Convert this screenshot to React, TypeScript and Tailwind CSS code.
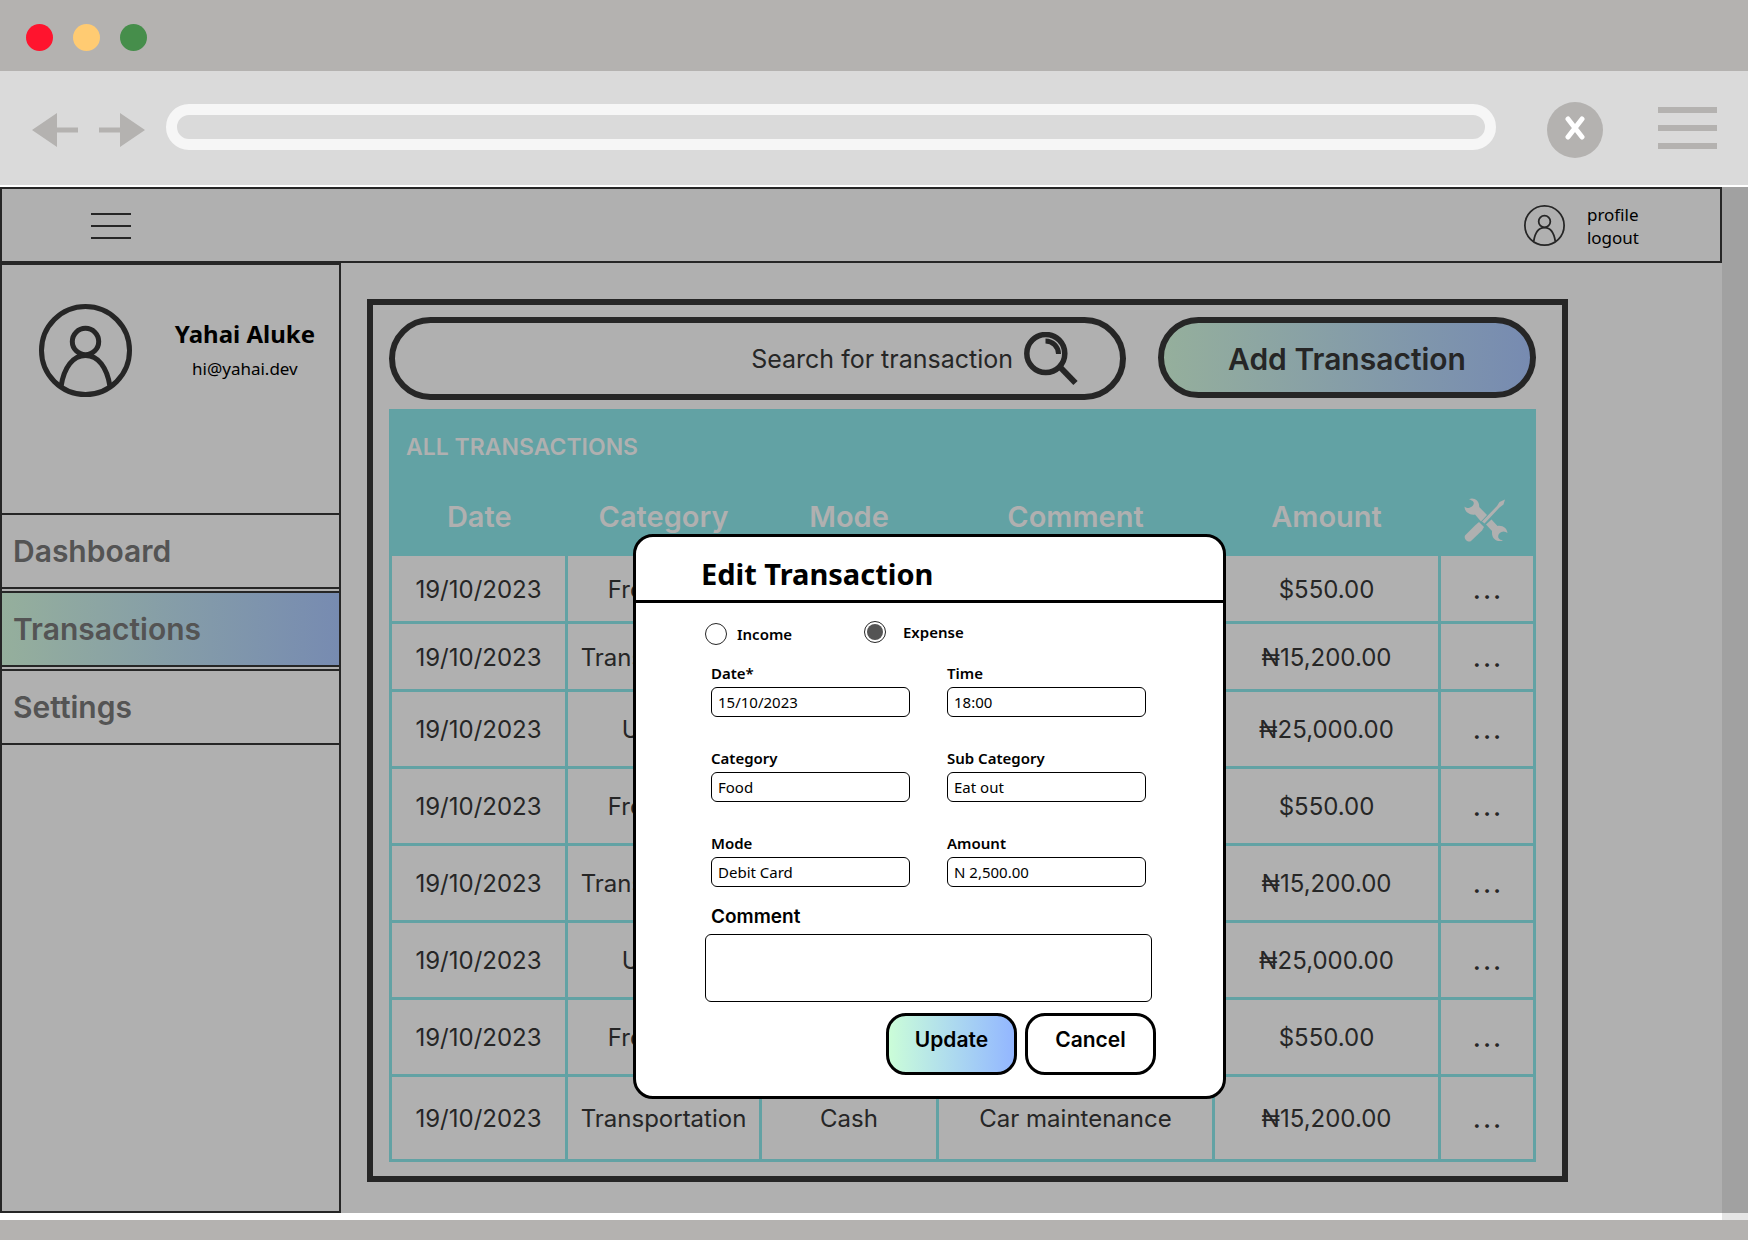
import React from 'react';

const rows = [
  { date: '19/10/2023', category: 'Freelance', mode: '', comment: '', amount: '$550.00', height: 'h-[68px]' },
  { date: '19/10/2023', category: 'Transportation', mode: '', comment: '', amount: '₦15,200.00', height: 'h-[68px]' },
  { date: '19/10/2023', category: 'Utilities', mode: '', comment: '', amount: '₦25,000.00', height: 'h-[77px]' },
  { date: '19/10/2023', category: 'Freelance', mode: '', comment: '', amount: '$550.00', height: 'h-[77px]' },
  { date: '19/10/2023', category: 'Transportation', mode: '', comment: '', amount: '₦15,200.00', height: 'h-[77px]' },
  { date: '19/10/2023', category: 'Utilities', mode: '', comment: '', amount: '₦25,000.00', height: 'h-[77px]' },
  { date: '19/10/2023', category: 'Freelance', mode: '', comment: '', amount: '$550.00', height: 'h-[77px]' },
  { date: '19/10/2023', category: 'Transportation', mode: 'Cash', comment: 'Car maintenance', amount: '₦15,200.00', height: 'h-[85px]' },
];

function Avatar({ className, stroke }: { className: string; stroke: number }) {
  return (
    <svg viewBox="0 0 93 93" className={className} fill="none" stroke="#262626" strokeWidth={stroke} aria-hidden="true">
      <circle cx="46.5" cy="46.5" r={46.5 - stroke / 2} />
      <circle cx="46.5" cy="37.5" r="13.200" />
      <path d="M22 82.5C25 63 34 51.5 46.5 51.5S68 63 71 82.5" />
    </svg>
  );
}

function Magnifier() {
  return (
    <svg viewBox="0 0 54 54" className="h-[54px] w-[54px]" fill="none" stroke="#262626" aria-hidden="true">
      <circle cx="21.800" cy="21.5" r="19" strokeWidth="5.500" />
      <path d="M21.500 9a13 13 0 0 1 13 13" strokeWidth="5" />
      <path d="M35.500 34.500L51.500 51" strokeWidth="6" />
    </svg>
  );
}

function Tools() {
  return (
    <svg viewBox="0 0 44 44" className="h-11 w-11" fill="#b0b0b0" aria-hidden="true">
      <path d="M5 1.200C10 -.8 15.500 2.500 15.200 9L23 17L17 23.500L11 16.500C6 17.500 .5 14 .5 8.500C2 10 4 10.500 6 9.500C9 8.500 10.500 6 9.500 4C8.500 2.500 7 2 5 1.200Z" />
      <path d="M27.500 21.500L33.500 28C38.500 27 43 30 43.500 35C41.500 33.500 39.500 33 37.500 34C35 35 33.500 37.500 34.500 40C35.500 41.500 37 42 39 42.500C33 44.500 28 41 28 35L28 33L22 26.500Z" />
      <path d="M41 1.500L39.500 6.500L35.500 9.500L20.500 25.500L18 23.500L33 8L35.500 4Z" />
      <path d="M15 24L20 29L18 32.500L7 43C4 45 -.5 41 1 37.500L11.500 27Z" />
    </svg>
  );
}

function Arrow({ flip }: { flip?: boolean }) {
  return (
    <svg viewBox="0 0 46 34" className={flip ? 'h-[34px] w-[46px] rotate-180' : 'h-[34px] w-[46px]'} fill="#b4b2b0" aria-hidden="true">
      <path d="M0 17L25 0V14.500H46V19.500H25V34Z" />
    </svg>
  );
}

function Field({ id, label, value }: { id: string; label: string; value: string }) {
  return (
    <div className="flex flex-col">
      <label htmlFor={id} className="h-7 text-[15px] leading-7 font-semibold">{label}</label>
      <input id={id} defaultValue={value} className="h-[30px] w-full rounded-md border border-black bg-white px-1.5 text-[15px] leading-5" />
    </div>
  );
}

function EditDialog() {
  return (
    <form
      role="dialog"
      aria-label="Edit Transaction"
      className="absolute top-[347px] left-[633px] flex w-[593px] flex-col rounded-[20px] border-[3px] border-black bg-white pb-[21px] font-['Noto_Sans','Open_Sans',sans-serif] text-black"
    >
      <h2 className="h-[66px] border-b-[3px] border-black pt-2 pl-[65px] text-[29px] leading-[58px] font-bold">Edit Transaction</h2>
      <div className="flex h-[54px] items-start pt-[18px] pl-[69px] text-[15px] font-semibold">
        <label className="flex w-[159px] items-center gap-2.5 pt-0.5 leading-[22px]">
          <input type="radio" name="kind" className="h-[22px] w-[22px] appearance-none rounded-full border border-[#262626]" />
          Income
        </label>
        <label className="flex items-center gap-[17px] leading-[22px]">
          <input type="radio" name="kind" defaultChecked className="h-[22px] w-[22px] appearance-none rounded-full border border-[#262626] bg-[#545454] bg-clip-content p-[2px]" />
          Expense
        </label>
      </div>
      <div className="grid grid-cols-2 gap-x-[37px] gap-y-[27px] pt-0.5 pr-[77px] pl-[75px]">
        <Field id="date" label="Date*" value="15/10/2023" />
        <Field id="time" label="Time" value="18:00" />
        <Field id="category" label="Category" value="Food" />
        <Field id="sub" label="Sub Category" value="Eat out" />
        <Field id="mode" label="Mode" value="Debit Card" />
        <Field id="amount" label="Amount" value="N 2,500.00" />
      </div>
      <label htmlFor="comment" className="mt-4 pl-[75px] font-['Inter',sans-serif] text-[19px] leading-7 font-semibold">Comment</label>
      <textarea id="comment" className="mt-[3px] mr-[71px] ml-[69px] h-[68px] resize-none rounded-md border border-black" />
      <div className="mt-[11px] flex justify-end gap-2 pr-[67px] font-['Inter',sans-serif] text-[21px] font-semibold">
        <button type="button" className="h-[62px] w-[131px] rounded-[20px] border-[3px] border-black bg-linear-to-r from-[#cbfdd8] to-[#93b6ff] pb-2">Update</button>
        <button type="button" className="h-[62px] w-[131px] rounded-[20px] border-[3px] border-black bg-white pb-2">Cancel</button>
      </div>
    </form>
  );
}

export default function App() {
  const nav = "flex h-[76px] items-center border-2 border-[#262626] pl-[11px]";
  const th = "text-center font-semibold";
  const td = "border-[3px] border-[#62a2a4] pt-0.5";
  return (
    <div className="flex min-h-screen flex-col bg-[#b4b2b0] font-['Inter',sans-serif] text-[#262626]">
      <div className="flex h-[71px] items-center gap-5 px-[26px] pt-1">
        <span className="h-[27px] w-[27px] rounded-full bg-[#ff142e]" />
        <span className="h-[27px] w-[27px] rounded-full bg-[#ffcb72]" />
        <span className="h-[27px] w-[27px] rounded-full bg-[#468e4b]" />
      </div>
      <div className="flex h-[116px] items-center border-b-2 border-white bg-[#dadada] pr-[31px] pl-8">
        <button type="button" aria-label="Back" className="mr-[21px] pt-[3px]"><Arrow /></button>
        <button type="button" aria-label="Forward" className="mr-[21px] pt-[3px]"><Arrow flip /></button>
        <input aria-label="Address" className="mb-0.5 h-[46px] min-w-0 flex-1 rounded-full border-[11px] border-[#f6f6f6] bg-[#dadada] px-3" />
        <button type="button" aria-label="Close" className="mt-1 mr-[55px] ml-[51px] flex h-14 w-14 items-center justify-center rounded-full bg-[#b4b2b0] pb-1">
          <svg viewBox="0 0 20 24" className="h-6 w-5" stroke="#fff" strokeWidth="5" strokeLinecap="round" aria-hidden="true"><path d="M3 3L17 21M17 3L3 21" /></svg>
        </button>
        <button type="button" aria-label="Menu" className="flex w-[59px] flex-col gap-3">
          <span className="h-1.5 bg-[#b4b2b0]" />
          <span className="h-1.5 bg-[#b4b2b0]" />
          <span className="h-1.5 bg-[#b4b2b0]" />
        </button>
      </div>

      <div className="relative flex bg-[#a1a1a1] pr-[26px]">
        <div className="flex min-w-0 flex-1 flex-col bg-[#b0b0b0]">
          <header className="flex h-[76px] items-center justify-between border-2 border-[#262626] pr-[81px] pl-[89px]">
            <button type="button" aria-label="Toggle sidebar" className="flex w-10 flex-col gap-[10px] pt-0.5">
              <span className="h-0.5 bg-[#262626]" />
              <span className="h-0.5 bg-[#262626]" />
              <span className="h-0.5 bg-[#262626]" />
            </button>
            <div className="flex items-center gap-[22px]">
              <Avatar className="h-[41px] w-[41px]" stroke={4} />
              <div className="flex flex-col pt-0.5 font-['Noto_Sans','Open_Sans',sans-serif] text-[17px] leading-[23px] text-black">
                <a href="#profile">profile</a>
                <a href="#logout">logout</a>
              </div>
            </div>
          </header>
          <div className="flex">
            <aside className="flex w-[341px] shrink-0 flex-col border-2 border-[#262626]">
              <div className="flex h-[248px] items-start justify-between pt-[39px] pr-6 pl-[37px] font-['Noto_Sans','Open_Sans',sans-serif] text-black">
                <Avatar className="h-[93px] w-[93px]" stroke={5} />
                <div className="flex flex-col items-center pt-3">
                  <strong className="text-2xl leading-9">Yahai Aluke</strong>
                  <span className="text-[17px] leading-[34px]">hi@yahai.dev</span>
                </div>
              </div>
              <nav className="-mx-0.5 flex flex-col gap-0.5 text-[30px] font-semibold text-[#545454]">
                <a href="#dashboard" className={nav}>Dashboard</a>
                <a href="#transactions" className={nav + " bg-linear-to-r from-[#95af9c] to-[#778bb1]"}>Transactions</a>
                <a href="#settings" className={nav}>Settings</a>
              </nav>
            </aside>
            <main className="min-w-0 flex-1 pt-9 pr-[154px] pb-[31px] pl-[26px]">
              <section className="border-[6px] border-[#262626] pt-3 pr-[26px] pb-[14px] pl-4">
                <div className="flex gap-8">
                  <label className="flex h-[83px] min-w-0 flex-1 items-center gap-[11px] rounded-full border-[6px] border-[#262626] pr-[42px] pl-8">
                    <input aria-label="Search" placeholder="Search for transaction" className="min-w-0 flex-1 pt-0.5 text-right text-[25px] placeholder:text-[#262626]" />
                    <Magnifier />
                  </label>
                  <button type="button" className="h-[81px] w-[378px] rounded-full border-[6px] border-[#262626] bg-linear-to-r from-[#95af9c] to-[#778bb1] pt-1 text-[30px] font-semibold">Add Transaction</button>
                </div>
                <table className="mt-[9px] w-full table-fixed border-collapse border-[3px] border-[#62a2a4] text-center text-2xl">
                  <colgroup>
                    <col className="w-[176px]" />
                    <col className="w-[194px]" />
                    <col className="w-[177px]" />
                    <col className="w-[276px]" />
                    <col className="w-[226px]" />
                    <col />
                  </colgroup>
                  <thead className="bg-[#62a2a4] text-[#b0b0b0]">
                    <tr className="h-[72px]">
                      <th colSpan={6} className="pl-[14px] text-left text-[23px] font-semibold">ALL TRANSACTIONS</th>
                    </tr>
                    <tr className="h-[72px] text-[29px]">
                      <th className={th}>Date</th>
                      <th className={th}>Category</th>
                      <th className={th}>Mode</th>
                      <th className={th}>Comment</th>
                      <th className={th}>Amount</th>
                      <th aria-label="Actions" className="pt-1"><div className="flex justify-center"><Tools /></div></th>
                    </tr>
                  </thead>
                  <tbody>
                    {rows.map((r, i) => (
                      <tr key={i} className={r.height}>
                        <td className={td}>{r.date}</td>
                        <td className={td}>{r.category}</td>
                        <td className={td}>{r.mode}</td>
                        <td className={td}>{r.comment}</td>
                        <td className={td}>{r.amount}</td>
                        <td className={td}><button type="button" aria-label="Row actions" className="block w-full pb-2 text-4xl leading-8 font-light">...</button></td>
                      </tr>
                    ))}
                  </tbody>
                </table>
              </section>
            </main>
          </div>
        </div>
        <EditDialog />
      </div>
      <div className="h-[7px] bg-[#e5e5e5] pr-[26px]"><div className="h-full bg-white" /></div>
      <footer className="h-5" />
    </div>
  );
}
